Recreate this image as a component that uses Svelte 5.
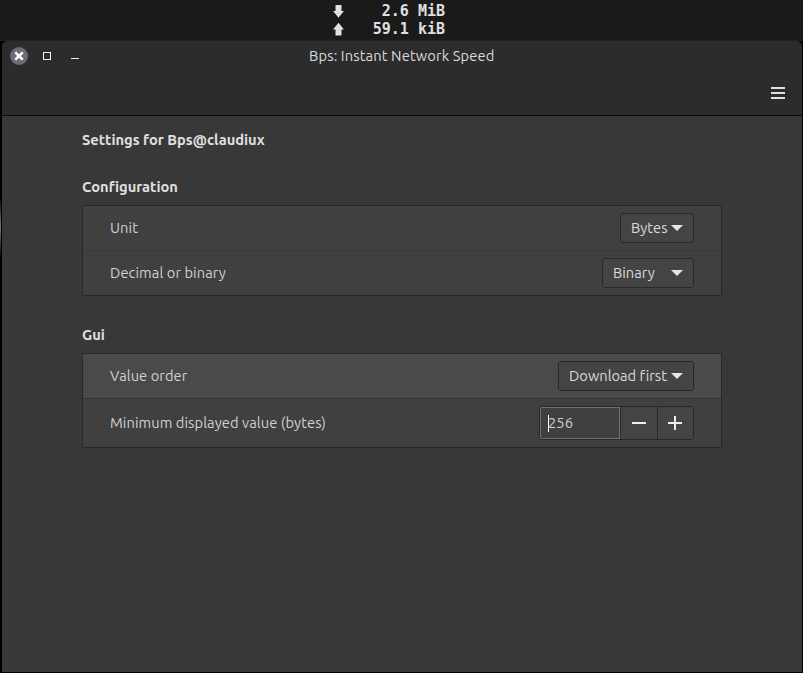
<script>
  let value = $state('256');
</script>

{#snippet arrow()}
  <svg class="arrow" width="12" height="6" viewBox="0 0 12 6"><path d="M0 0H12L6 6Z" fill="#e6e6e6" /></svg>
{/snippet}

<div class="screen">
  <div class="panel">
    <div class="speed">
      <svg width="13" height="14" viewBox="0 0 13 14"><path d="M3.5 1H9.5V7H12L6.5 13.8L1 7H3.5Z" fill="#e0e0e0" /></svg>
      <span>2.6 MiB</span>
    </div>
    <div class="speed">
      <svg width="13" height="14" viewBox="0 0 13 14"><path d="M3.5 13.5H9.5V7.5H12L6.5 .7L1 7.5H3.5Z" fill="#e0e0e0" /></svg>
      <span>59.1 kiB</span>
    </div>
  </div>

  <div class="window">
    <header>
      <div class="titlebar">
        <svg class="controls" width="90" height="30" viewBox="0 0 90 30">
          <circle cx="17" cy="15" r="9" fill="#6c6e77" />
          <path d="M13.3 11.3L20.7 18.7M20.7 11.3L13.3 18.7" stroke="#fff" stroke-width="2.5" />
          <rect x="41.5" y="11.5" width="7" height="7" fill="none" stroke="#eee" />
          <path d="M69 17.5H77" stroke="#eee" />
        </svg>
        <span class="title">Bps: Instant Network Speed</span>
      </div>
      <div class="toolbar">
        <svg width="14" height="12" viewBox="0 0 14 12"><path d="M0 1H14M0 6H14M0 11H14" stroke="#e3dfe3" stroke-width="2" /></svg>
      </div>
    </header>

    <main>
      <h1>Settings for Bps@claudiux</h1>
      <h2 class="conf">Configuration</h2>
      <section>
        <div class="row">
          <span>Unit</span>
          <button class="combo" style="width: 74px"><span>Bytes</span>{@render arrow()}</button>
        </div>
        <div class="row">
          <span>Decimal or binary</span>
          <button class="combo" style="width: 92px"><span>Binary</span>{@render arrow()}</button>
        </div>
      </section>

      <h2 class="gui">Gui</h2>
      <section>
        <div class="row hover">
          <span>Value order</span>
          <button class="combo" style="width: 136px"><span class="fit">Download first</span>{@render arrow()}</button>
        </div>
        <div class="row">
          <span>Minimum displayed value (bytes)</span>
          <div class="spin">
            <div class="entry"><i></i><span>{value}</span></div>
            <button aria-label="Decrease"><svg width="14" height="14" viewBox="0 0 14 14"><path d="M0 7H14" stroke="#eee" stroke-width="2" /></svg></button>
            <button aria-label="Increase"><svg width="14" height="14" viewBox="0 0 14 14"><path d="M0 7H14M7 0V14" stroke="#eee" stroke-width="2" /></svg></button>
          </div>
        </div>
      </section>
    </main>
  </div>
</div>

<style>
  :global(body) { margin: 0; background: #000; }
  * { box-sizing: border-box; }
  .screen {
    width: 803px; height: 673px; overflow: hidden;
    background: linear-gradient(transparent, #777 50%, transparent) 0 196px / 1px 62px no-repeat, #000;
    font: 14.667px/20px Ubuntu, "Noto Sans", sans-serif; color: #dadada;
    font-variant-ligatures: none;
  }
  .panel {
    height: 41px; padding: 2px 0 0 332px; background: #1a1a1a; border-bottom: 1px solid #222;
    font: bold 15px/18px "DejaVu Sans Mono", monospace; color: #e0e0e0;
  }
  .speed { display: flex; align-items: center; justify-content: space-between; width: 113px; height: 18px; }
  .window {
    width: 800px; height: 631px; margin-left: 2px; overflow: hidden;
    background: #383838; border-radius: 6px 6px 0 0;
  }
  header { height: 75px; background: #2c2c2c; border-bottom: 1px solid #0c0c0c; }
  .titlebar { display: flex; height: 30px; align-items: center; }
  .controls { flex: none; }
  .title { margin-left: 217px; white-space: nowrap; letter-spacing: .13px; }
  .toolbar { display: flex; justify-content: flex-end; padding: 16px 17px 0 0; }
  .toolbar svg { display: block; }
  main { padding: 14px 80px 0; }
  h1, h2 { margin: 0; height: 20px; font-size: 14.667px; font-weight: 600; line-height: 20px; white-space: nowrap; color: #e0e0e0; }
  .conf { margin-top: 27px; }
  .gui { margin-top: 29px; }
  section { margin-top: 8px; background: #404040; border: 1px solid #282828; }
  .row {
    display: flex; align-items: center; justify-content: space-between;
    height: 44px; padding: 0 27px; color: #d0d0d0; white-space: nowrap; letter-spacing: .07px;
  }
  .row + .row { border-top: 1px solid #383838; height: 45px; }
  .row.hover { background: #4a4a4a; }
  .row.hover + .row { border-top-color: #343434; height: 49px; }
  button { margin: 0; font: inherit; color: #dadada; background: #444; border: 1px solid #282828; }
  .combo {
    display: flex; align-items: center; justify-content: space-between;
    height: 30px; padding: 0 10px; border-radius: 3px;
  }
  .arrow { flex: none; }
  .spin { display: flex; height: 34px; width: 155px; border: 1px solid #282828; border-radius: 3px; overflow: hidden; }
  .entry { display: flex; align-items: center; width: 80px; padding-left: 7px; border: 1px solid #70727c; background: #404040; }
  .entry i { width: 1px; height: 17px; margin-right: -1px; background: #fff; }
  .spin button { display: flex; align-items: center; justify-content: center; width: 37px; padding: 0; border-width: 0 0 0 1px; }
  .spin button:last-child { width: 36px; padding-right: 1px; }
</style>
